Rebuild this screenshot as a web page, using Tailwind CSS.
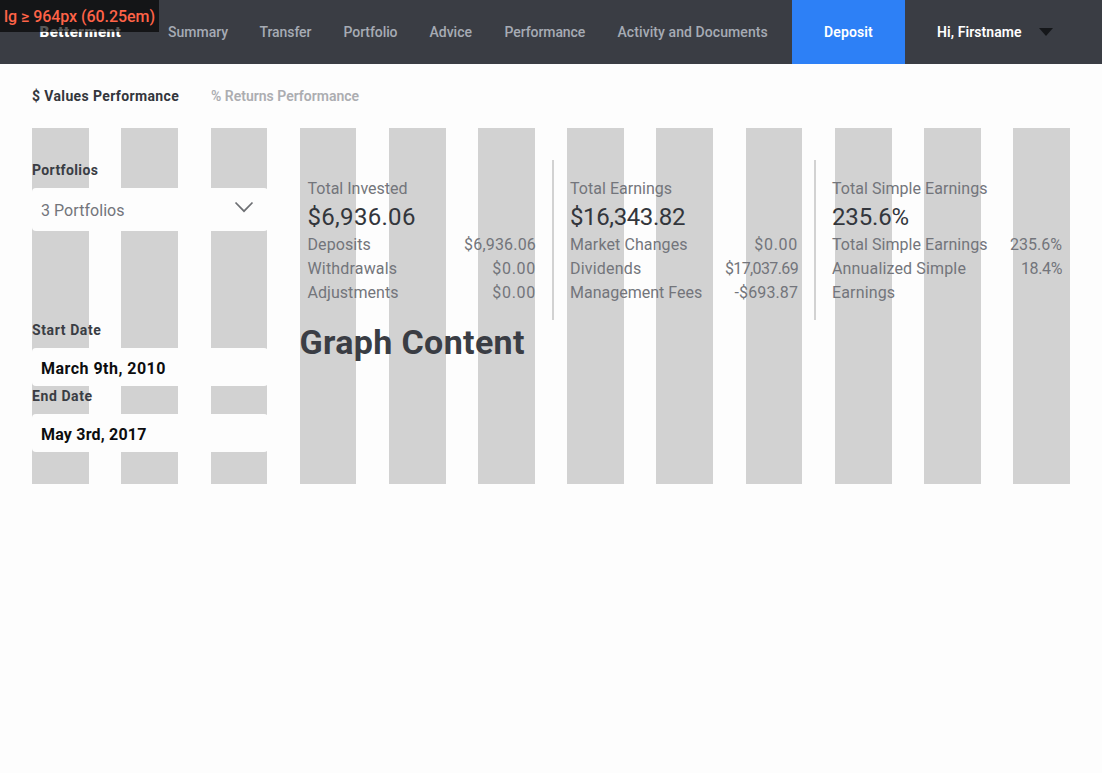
<!DOCTYPE html>
<html lang="en">
<head>
<meta charset="utf-8">
<title>Performance</title>
<script src="https://cdn.jsdelivr.net/npm/@tailwindcss/browser@4"></script>
</head>
<body class="min-h-screen bg-[#fdfdfd] font-['Roboto',sans-serif] text-base text-[#73757b]">
<div class="absolute top-0 left-0 z-10 flex h-8 w-[159px] items-center bg-black/65 pt-0.5 pl-1 text-base font-medium tracking-[-0.05px] whitespace-nowrap text-[#ff6347]">lg ≥ 964px (60.25em)</div>

<header class="flex h-16 items-stretch bg-[#3a3d44] text-sm font-medium whitespace-nowrap text-[#a6abb4]">
  <nav class="flex w-[792px] shrink-0 items-center">
    <a class="w-[168px] pt-0.5 pl-[39.500px] text-[15px] font-black tracking-[0.5px] text-white">Betterment</a>
    <a class="w-[91.500px]">Summary</a>
    <a class="w-[84px] tracking-[-0.08px]">Transfer</a>
    <a class="w-[86px] tracking-[-0.08px]">Portfolio</a>
    <a class="w-[75px]">Advice</a>
    <a class="w-[113px] tracking-[-0.08px]">Performance</a>
    <a class="tracking-[0.08px]">Activity and Documents</a>
  </nav>
  <a class="flex w-[113px] shrink-0 items-center justify-center bg-[#2d80f6] font-semibold tracking-[0.12px] text-white">Deposit</a>
  <a class="flex items-center gap-[17px] pl-8 font-semibold tracking-[0.08px] text-white">Hi, Firstname
    <svg class="h-2 w-3.5" viewBox="0 0 14 8" fill="#15171a"><path d="M0 0h14L7 8z"/></svg>
  </a>
</header>

<div class="flex h-16 items-center gap-8 px-8 text-sm font-bold whitespace-nowrap">
  <span class="w-[147px] tracking-[0.37px] text-[#33363c]">$ Values Performance</span>
  <span class="font-semibold text-[#acadb1]">% Returns Performance</span>
</div>

<main class="mx-8 grid h-[356px]">
  <div class="col-start-1 row-start-1 grid grid-cols-[89px_90px_89px_89px_89px_89px_89px_90px_89px_89px_89px_57px]">
    <i class="w-[57px] bg-[#d2d2d2]"></i><i class="w-[57px] bg-[#d2d2d2]"></i><i class="w-14 bg-[#d2d2d2]"></i><i class="w-14 bg-[#d2d2d2]"></i><i class="w-[57px] bg-[#d2d2d2]"></i><i class="w-[57px] bg-[#d2d2d2]"></i><i class="w-[57px] bg-[#d2d2d2]"></i><i class="w-[57px] bg-[#d2d2d2]"></i><i class="w-14 bg-[#d2d2d2]"></i><i class="w-[57px] bg-[#d2d2d2]"></i><i class="w-[57px] bg-[#d2d2d2]"></i><i class="w-[57px] bg-[#d2d2d2]"></i>
  </div>
  <div class="z-1 col-start-1 row-start-1 grid grid-cols-12 gap-x-8 pt-8">
    <section class="col-span-3 text-[#3a3d44]">
      <div class="mb-2 text-sm leading-5 font-bold tracking-[0.38px]">Portfolios</div>
      <div class="flex h-[43px] items-center justify-between rounded bg-[#fdfdfd] pt-0.5 pr-[14px] pl-[9px] tracking-[0.05px] text-[#73757b]">3 Portfolios
        <svg class="-mt-2 h-3 w-5" viewBox="0 0 20 12" fill="none" stroke="#6d6f73" stroke-width="1.7"><path d="M1.500 1.500 10 10.200l8.500-8.700"/></svg>
      </div>
      <div class="mt-[89px] mb-2 text-sm leading-5 font-bold tracking-[0.6px]">Start Date</div>
      <div class="flex h-[38px] items-center rounded bg-[#fdfdfd] pt-1 pl-[9px] font-bold tracking-[0.48px] text-[#0c0d0f]">March 9th, 2010</div>
      <div class="mb-2 text-sm leading-5 font-bold tracking-[0.58px]">End Date</div>
      <div class="flex h-[38px] items-center rounded bg-[#fdfdfd] pt-1 pl-[9px] font-bold tracking-[0.2px] text-[#0c0d0f]">May 3rd, 2017</div>
    </section>
    <section class="col-span-9">
      <div class="flex h-40 leading-6 whitespace-nowrap">
        <div class="w-[254.500px] border-r-2 border-[#d2d2d2] pt-[17px] pr-4 pl-2">
          <div>Total Invested</div>
          <div class="text-2xl tracking-[0.3px] text-[#33363c]">$6,936.06</div>
          <div class="flex justify-between"><span class="tracking-[0.08px]">Deposits</span><span class="tracking-[0.18px]">$6,936.06</span></div>
          <div class="flex justify-between"><span class="tracking-[0.17px]">Withdrawals</span><span class="tracking-[0.7px]">$0.00</span></div>
          <div class="flex justify-between"><span class="tracking-[0.05px]">Adjustments</span><span class="tracking-[0.7px]">$0.00</span></div>
        </div>
        <div class="w-[262px] border-r-2 border-[#d2d2d2] px-4 pt-[17px]">
          <div class="tracking-[0.03px]">Total Earnings</div>
          <div class="text-2xl tracking-[-0.39px] text-[#33363c]">$16,343.82</div>
          <div class="flex justify-between"><span class="tracking-[0.1px]">Market Changes</span><span class="tracking-[0.7px]">$0.00</span></div>
          <div class="flex justify-between"><span class="tracking-[0.2px]">Dividends</span><span class="tracking-[-0.63px]">$17,037.69</span></div>
          <div class="flex justify-between"><span>Management Fees</span><span class="tracking-[0.1px]">-$693.87</span></div>
        </div>
        <div class="flex-1 pt-[17px] pr-2 pl-4">
          <div class="tracking-[0.05px]">Total Simple Earnings</div>
          <div class="text-2xl tracking-[-0.15px] text-[#33363c]">235.6%</div>
          <div class="flex justify-between"><span class="tracking-[0.05px]">Total Simple Earnings</span><span>235.6%</span></div>
          <div class="flex justify-between"><span class="tracking-[0.15px]">Annualized Simple<br>Earnings</span><span class="tracking-[-0.38px]">18.4%</span></div>
        </div>
      </div>
      <h1 class="-mt-px text-[34px] leading-[46px] font-bold tracking-[0.35px] text-[#3a3d44]">Graph Content</h1>
    </section>
  </div>
</main>
</body>
</html>
